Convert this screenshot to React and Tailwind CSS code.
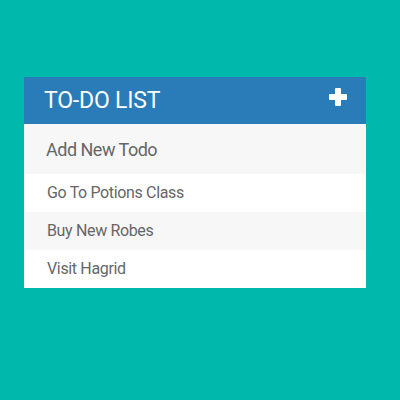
export default function App() {
  const todos = ['Go To Potions Class', 'Buy New Robes', 'Visit Hagrid'];

  return (
    <div className="w-[400px] h-[400px] bg-[#00b9ad] pt-[77px] pl-[24px] font-['Roboto',sans-serif]">
      <div className="w-[342px] bg-white">
        {/* Header */}
        <div className="h-[47px] bg-[#2a7cb8] flex items-center justify-between pl-[20px] pr-[19px]">
          <h1 className="text-[23px] text-white leading-none tracking-[-0.2px]">TO-DO LIST</h1>
          <svg width="18" height="18" viewBox="0 0 18 18" className="mt-[-7px]">
            <rect x="6" y="0" width="6" height="18" rx="1" fill="white" />
            <rect x="0" y="6" width="18" height="6" rx="1" fill="white" />
          </svg>
        </div>

        {/* Input */}
        <div className="h-[50px] bg-[#f7f7f7] flex items-center pl-[22px]">
          <span className="text-[18px] text-[#666] tracking-[-0.5px]">Add New Todo</span>
        </div>

        {/* List */}
        <ul>
          {todos.map((t, i) => (
            <li
              key={t}
              className={`h-[38px] flex items-center pl-[23px] text-[16px] text-[#666] tracking-[-0.35px] ${i % 2 === 1 ? 'bg-[#f7f7f7]' : 'bg-white'}`}
            >
              {t}
            </li>
          ))}
        </ul>
      </div>
    </div>
  );
}
